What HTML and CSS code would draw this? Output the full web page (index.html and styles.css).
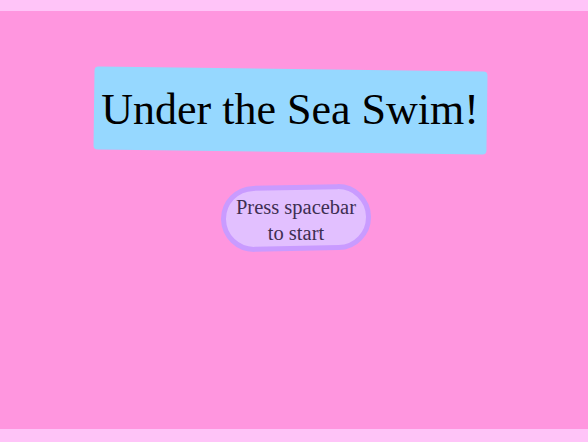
FILE: index.html
```html
<!DOCTYPE html>
<html>
<head>
<meta charset="utf-8">
<link rel="stylesheet" href="styles.css">
</head>
<body>
<main class="stage">
  <div class="title-box">
    <h1 class="title">Under the Sea Swim!</h1>
  </div>
  <div class="start-pill"><span class="pill-text">Press spacebar<br>to start</span></div>
</main>
</body>
</html>
```
FILE: styles.css
```css
html, body {
  margin: 0;
  padding: 0;
}
body {
  background: #ffc4f8;
  width: 588px;
  height: 442px;
  overflow: hidden;
  padding-top: 11px;
  box-sizing: border-box;
  font-family: "Liberation Serif", "Times New Roman", serif;
}
.stage {
  height: 418px;
  background: #ff96df;
  display: flex;
  flex-direction: column;
  align-items: center;
  padding-top: 58px;
  box-sizing: border-box;
}
.title-box {
  position: relative;
  width: 393px;
  height: 83px;
  margin-left: -8px;
  padding-top: 19px;
  box-sizing: border-box;
  text-align: center;
}
.title-box::before {
  content: "";
  position: absolute;
  inset: 0;
  background: #96d8ff;
  border-radius: 4px;
  transform: rotate(0.75deg);
}
.title {
  position: relative;
  margin: 0;
  font-family: "Liberation Serif", "Times New Roman", serif;
  font-weight: normal;
  font-size: 44px;
  color: #000;
  line-height: 44px;
}
.start-pill {
  position: relative;
  margin-top: 33px;
  margin-left: 4px;
  width: 150px;
  height: 66px;
  display: flex;
  align-items: center;
  justify-content: center;
}
.start-pill::before {
  content: "";
  position: absolute;
  inset: 0;
  border: 5px solid #c99bff;
  background: #e2c0ff;
  border-radius: 34px;
  transform: rotate(-1.2deg);
}
.pill-text {
  position: relative;
  color: #3e2e52;
  font-family: "Liberation Serif", "Times New Roman", serif;
  font-size: 20.5px;
  line-height: 26px;
  text-align: center;
  padding-top: 4px;
}
```
